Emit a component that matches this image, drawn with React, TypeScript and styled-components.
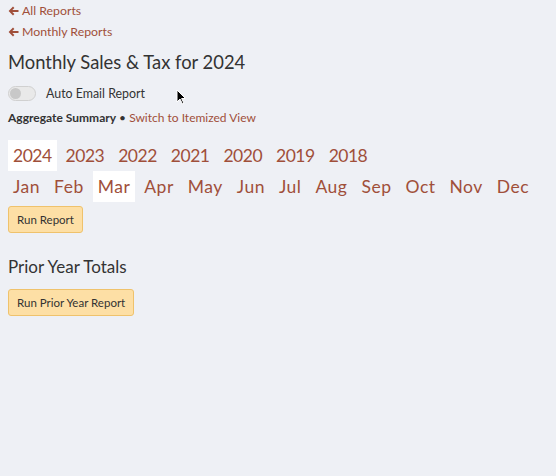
import React from "react";
import styled, { createGlobalStyle } from "styled-components";

const GlobalStyle = createGlobalStyle`
  html, body {
    margin: 0;
    padding: 0;
    background: #eef0f5;
    font-family: Lato, "Open Sans", sans-serif;
    color: #333;
  }
`;

const Page = styled.div`
  position: relative;
  min-height: 476px;
  padding: 0 8px;
  box-sizing: border-box;
`;

const BackLink = styled.a`
  display: flex;
  align-items: center;
  gap: 3px;
  height: 21px;
  font-size: 12.3px;
  color: #a04f3a;
  text-decoration: none;
  svg {
    flex: none;
  }
`;

const Title = styled.h1`
  margin: 6px 0 0;
  font-size: 18.4px;
  line-height: 28px;
  font-weight: 400;
  color: #333;
`;

const ToggleRow = styled.label`
  display: flex;
  align-items: center;
  gap: 10px;
  height: 20px;
  margin-top: 7px;
  font-size: 12.4px;
`;

const Track = styled.span`
  position: relative;
  width: 26px;
  height: 13px;
  border-radius: 8px;
  border: 1px solid #d0d0d0;
  background: #e9e9e9;
  span {
    position: absolute;
    left: 1px;
    top: 1px;
    width: 11px;
    height: 11px;
    border-radius: 50%;
    background: #c8c8c8;
  }
`;

const ViewRow = styled.div`
  height: 18px;
  line-height: 18px;
  margin-top: 6px;
  font-size: 12px;
  b {
    font-weight: 700;
    color: #333;
  }
  a {
    color: #a04f3a;
    text-decoration: none;
  }
`;

const Picker = styled.div<{ $top?: number; $spacing: number }>`
  display: flex;
  gap: 4px;
  margin-top: ${(p) => p.$top ?? 0}px;
  letter-spacing: ${(p) => p.$spacing}px;
`;

const Pick = styled.a<{ $active?: boolean }>`
  padding: 3px 5px;
  font-size: 17.5px;
  line-height: 25px;
  color: #a04f3a;
  background: ${(p) => (p.$active ? "#fff" : "transparent")};
  text-decoration: none;
`;

const Button = styled.button<{ $top: number }>`
  display: block;
  margin-top: ${(p) => p.$top}px;
  height: 27px;
  padding: 0 8px;
  font-family: inherit;
  font-size: 11.5px;
  color: #333;
  background: #fddfa5;
  border: 1px solid #efc26c;
  border-radius: 3px;
`;

const Subtitle = styled.h2`
  margin: 22px 0 0;
  font-size: 17px;
  line-height: 24px;
  font-weight: 400;
  color: #333;
`;

const Cursor = styled.svg`
  position: absolute;
  left: 176px;
  top: 89px;
`;

function Arrow() {
  return (
    <svg width="11" height="10" viewBox="0 0 11 10">
      <path
        d="M5 0.6 L6.4 2 L4.3 4.1 H10.5 V5.9 H4.3 L6.4 8 L5 9.4 L0.6 5 Z"
        fill="#a04f3a"
      />
    </svg>
  );
}

const years = ["2024", "2023", "2022", "2021", "2020", "2019", "2018"];
const months = ["Jan", "Feb", "Mar", "Apr", "May", "Jun", "Jul", "Aug", "Sep", "Oct", "Nov", "Dec"];

export default function App() {
  return (
    <Page>
      <GlobalStyle />
      <BackLink href="#">
        <Arrow />
        All Reports
      </BackLink>
      <BackLink href="#">
        <Arrow />
        Monthly Reports
      </BackLink>
      <Title>Monthly Sales &amp; Tax for 2024</Title>
      <ToggleRow>
        <Track>
          <span />
        </Track>
        Auto Email Report
      </ToggleRow>
      <ViewRow>
        <b>Aggregate Summary</b> • <a href="#">Switch to Itemized View</a>
      </ViewRow>
      <Picker $top={13} $spacing={-0.5}>
        {years.map((y) => (
          <Pick key={y} href="#" $active={y === "2024"}>
            {y}
          </Pick>
        ))}
      </Picker>
      <Picker $spacing={0.5}>
        {months.map((m) => (
          <Pick key={m} href="#" $active={m === "Mar"}>
            {m}
          </Pick>
        ))}
      </Picker>
      <Button $top={4}>Run Report</Button>
      <Subtitle>Prior Year Totals</Subtitle>
      <Button $top={10}>Run Prior Year Report</Button>
      <Cursor width="10" height="16" viewBox="0 0 10 16">
        <path d="M1 1 V13 L4 10 L6.5 15 L8 14.3 L5.6 9.5 H9.5 Z" fill="#000" stroke="#fff" strokeWidth="1" />
      </Cursor>
    </Page>
  );
}
